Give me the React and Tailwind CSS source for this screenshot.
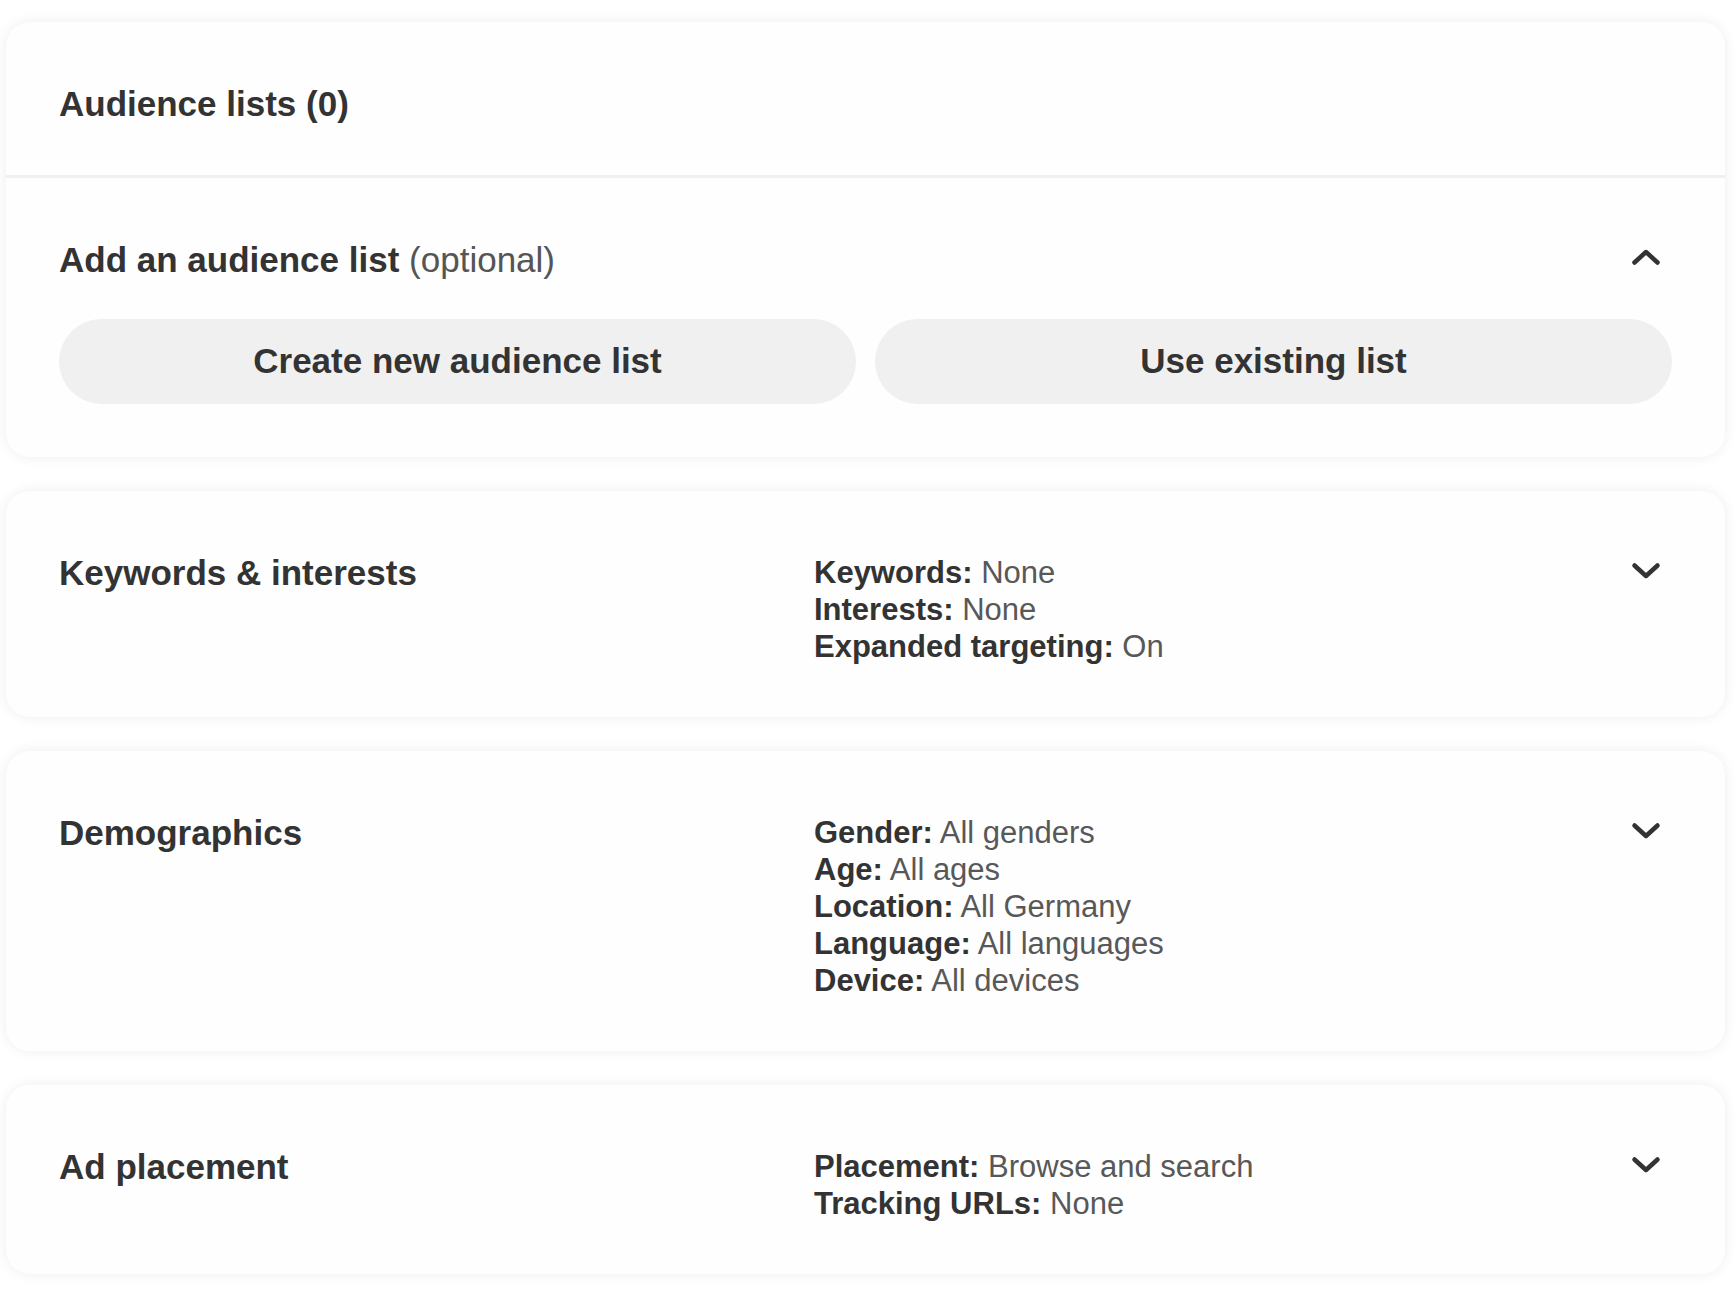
import React from "react";

function Chevron({ up = false }) {
  return (
    <svg width="30" height="18" viewBox="0 0 30 18" className="shrink-0" aria-hidden="true">
      <path
        d={up ? "M3.5 14.5 L15 4 L26.5 14.5" : "M3.5 3.5 L15 14 L26.5 3.5"}
        fill="none"
        stroke="#333333"
        strokeWidth="4.5"
        strokeLinecap="round"
        strokeLinejoin="round"
      />
    </svg>
  );
}

function Card({ children }) {
  return (
    <div className="rounded-[24px] bg-[#fefefe] shadow-[0_0_14px_rgba(0,0,0,0.07)] overflow-hidden">
      {children}
    </div>
  );
}

function SummaryCard({ title, rows }) {
  return (
    <Card>
      <div className="flex pl-[53px] pr-[64px] pt-[63px] pb-[52px]">
        <div className="w-[755px] shrink-0 text-[35px] leading-[37px] font-bold text-[#333333]">{title}</div>
        <div className="flex-1 flex flex-col text-[31px] leading-[37px] text-[#585858]">
          {rows.map(([k, v]) => (
            <div key={k}>
              <span className="font-bold text-[#333333]">{k}:</span> {v}
            </div>
          ))}
        </div>
        <div className="h-[37px] flex items-center -mt-[2px]">
          <Chevron />
        </div>
      </div>
    </Card>
  );
}

export default function App() {
  return (
    <div
      className="min-h-[1306px] w-[1736px] bg-white pt-[22px] pl-[6px] pr-[11px]"
      style={{ fontFamily: '"Liberation Sans", Arial, sans-serif' }}
    >
      <div className="flex flex-col gap-[34px]">
        <Card>
          <div className="px-[53px] pt-[63px] pb-[53px] text-[35px] leading-[37px] font-bold text-[#333333]">
            Audience lists (0)
          </div>
          <div className="h-[3px] bg-[#f0f0f0]" />
          <div className="px-[53px] pt-[63px] pb-[53px]">
            <div className="flex items-center justify-between pr-[11px]">
              <div className="text-[35px] leading-[37px] text-[#333333]">
                <span className="font-bold">Add an audience list</span>{" "}
                <span className="text-[#555555] font-normal">(optional)</span>
              </div>
              <div className="-mt-[6px]">
                <Chevron up />
              </div>
            </div>
            <div className="mt-[41px] grid grid-cols-2 gap-[19px]">
              <button className="h-[85px] rounded-full bg-[#f0f0f0] text-[35px] font-bold text-[#333333]">
                Create new audience list
              </button>
              <button className="h-[85px] rounded-full bg-[#f0f0f0] text-[35px] font-bold text-[#333333]">
                Use existing list
              </button>
            </div>
          </div>
        </Card>

        <SummaryCard
          title="Keywords & interests"
          rows={[
            ["Keywords", "None"],
            ["Interests", "None"],
            ["Expanded targeting", "On"],
          ]}
        />
        <SummaryCard
          title="Demographics"
          rows={[
            ["Gender", "All genders"],
            ["Age", "All ages"],
            ["Location", "All Germany"],
            ["Language", "All languages"],
            ["Device", "All devices"],
          ]}
        />
        <SummaryCard
          title="Ad placement"
          rows={[
            ["Placement", "Browse and search"],
            ["Tracking URLs", "None"],
          ]}
        />
      </div>
    </div>
  );
}
